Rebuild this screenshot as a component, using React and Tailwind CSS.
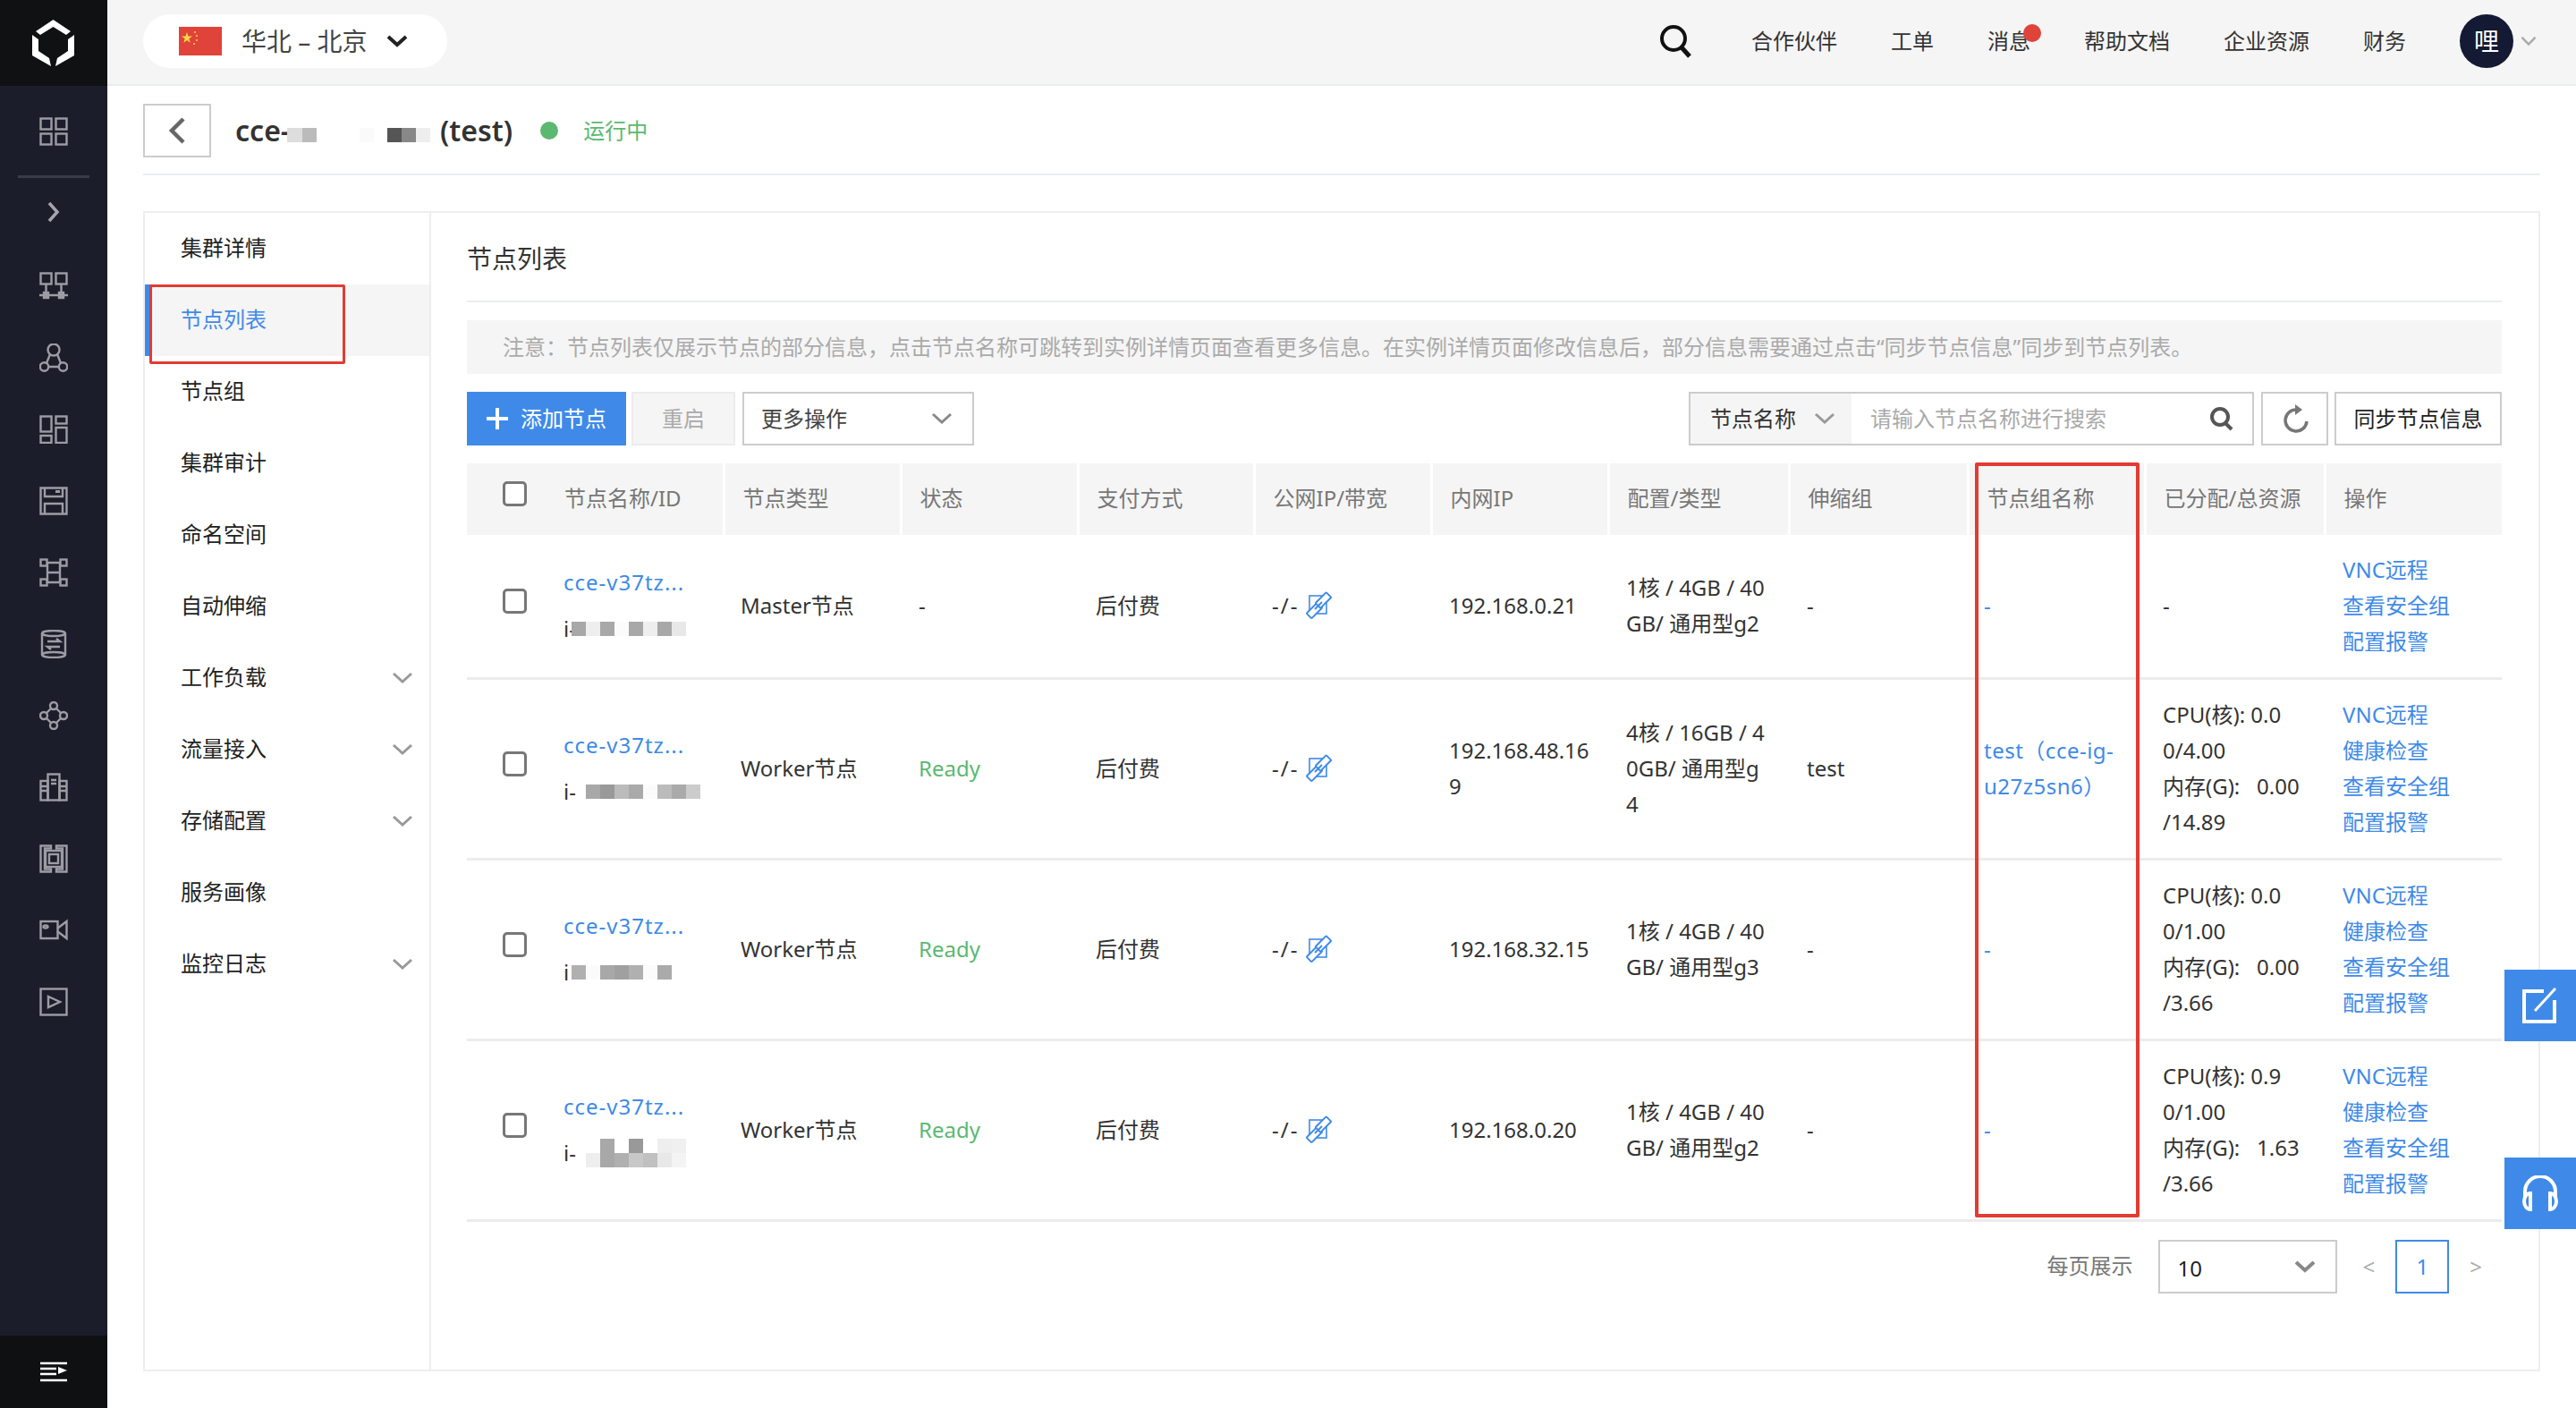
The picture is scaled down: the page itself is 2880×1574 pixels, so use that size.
const FONT = "font-['Noto_Sans','Noto_Sans_CJK_SC',sans-serif]";

// one 32x32 icon in the dark side rail
const RailIcon = ({ children }) => (
  <div className="h-20 flex items-center justify-center shrink-0">
    <svg width="32" height="32" viewBox="0 0 32 32" fill="none" stroke="#9c9da4" strokeWidth="2.400">
      {children}
    </svg>
  </div>
);

const Chevron = ({ className = '', color = '#999', width = 24, height = 14, stroke = 3 }) => (
  <svg width={width} height={height} viewBox="0 0 24 14" fill="none" stroke={color} strokeWidth={stroke} preserveAspectRatio="none" className={className}>
    <path d="M2 2l10 9 10-9" />
  </svg>
);

const Blocks = ({ colors, size = 16 }) => (
  <div className="flex">
    {colors.map((c, i) => (
      <div key={i} style={{ background: c, width: size, height: size }} />
    ))}
  </div>
);

const LinkIcon = () => (
  <svg width="30" height="32" viewBox="0 0 30 32" fill="none" stroke="#3f8ae8" strokeWidth="2" className="shrink-0">
    <rect x="5" y="5" width="19" height="20" strokeWidth="1.600" />
    <rect x="2" y="17.500" width="17" height="8" rx="1" transform="rotate(-45 10.500 21.500)" fill="#ffffff" />
    <rect x="12" y="6" width="17" height="8" rx="1" transform="rotate(-45 20.500 10)" fill="#ffffff" />
    <path d="M11 20l8-8" />
  </svg>
);

const columns = [
  { label: '节点名称/ID', w: 'w-[287px]' },
  { label: '节点类型', w: 'w-[198px]' },
  { label: '状态', w: 'w-[198px]' },
  { label: '支付方式', w: 'w-[197px]' },
  { label: '公网IP/带宽', w: 'w-[198px]' },
  { label: '内网IP', w: 'w-[198px]' },
  { label: '配置/类型', w: 'w-[202px]' },
  { label: '伸缩组', w: 'w-[200px]' },
  { label: '节点组名称', w: 'w-[198px]' },
  { label: '已分配/总资源', w: 'w-[201px]' },
  { label: '操作', w: 'w-[198px]' },
];

const OPS = ['VNC远程', '健康检查', '查看安全组', '配置报警'];

const rows = [
  {
    h: 'h-[160px]',
    type: 'Master节点',
    status: '-',
    ip: ['192.168.0.21'],
    config: ['1核 / 4GB / 40', 'GB/ 通用型g2'],
    scale: '-',
    group: ['-'],
    res: ['-'],
    ops: ['VNC远程', '查看安全组', '配置报警'],
    idPrefix: 'i-',
    idGap: 'ml-0',
    id: [['#a8a8a8', '#eeeeee', '#a8a8a8', '#fbfbfb', '#a8a8a8', '#eeeeee', '#a8a8a8', '#e8e8e8']],
  },
  {
    h: 'h-[202px]',
    type: 'Worker节点',
    status: 'Ready',
    ip: ['192.168.48.16', '9'],
    config: ['4核 / 16GB / 4', '0GB/ 通用型g', '4'],
    scale: 'test',
    group: ['test（cce-ig-', 'u27z5sn6）'],
    res: ['CPU(核): 0.0', '0/4.00', '内存(G):   0.00', '/14.89'],
    ops: OPS,
    idPrefix: 'i-',
    idGap: 'ml-4',
    id: [['#a8a8a8', '#999999', '#bbbbbb', '#aaaaaa', '#fbfbfb', '#bbbbbb', '#aaaaaa', '#cccccc']],
  },
  {
    h: 'h-[202px]',
    type: 'Worker节点',
    status: 'Ready',
    ip: ['192.168.32.15'],
    config: ['1核 / 4GB / 40', 'GB/ 通用型g3'],
    scale: '-',
    group: ['-'],
    res: ['CPU(核): 0.0', '0/1.00', '内存(G):   0.00', '/3.66'],
    ops: OPS,
    idPrefix: 'i',
    idGap: 'ml-0',
    id: [['#b0b0b0', '#fbfbfb', '#a8a8a8', '#a0a0a0', '#b0b0b0', '#fbfbfb', '#aaaaaa']],
  },
  {
    h: 'h-[202px]',
    type: 'Worker节点',
    status: 'Ready',
    ip: ['192.168.0.20'],
    config: ['1核 / 4GB / 40', 'GB/ 通用型g2'],
    scale: '-',
    group: ['-'],
    res: ['CPU(核): 0.9', '0/1.00', '内存(G):   1.63', '/3.66'],
    ops: OPS,
    idPrefix: 'i-',
    idGap: 'ml-4',
    id: [
      ['#ffffff', '#a8a8a8', '#ffffff', '#999999', '#ffffff', '#eeeeee', '#f0f0f0'],
      ['#eeeeee', '#a8a8a8', '#b0b0b0', '#c8c8c8', '#c0c0c0', '#e8e8e8', '#f4f4f4'],
    ],
  },
];

const navItems = [
  { label: '集群详情' },
  { label: '节点列表', active: true },
  { label: '节点组' },
  { label: '集群审计' },
  { label: '命名空间' },
  { label: '自动伸缩' },
  { label: '工作负载', more: true },
  { label: '流量接入', more: true },
  { label: '存储配置', more: true },
  { label: '服务画像' },
  { label: '监控日志', more: true },
];

const topLinks = [
  { label: '合作伙伴', w: 'w-[96px]' },
  { label: '工单', w: 'w-[48px]' },
  { label: '消息', w: 'w-[48px]', dot: true },
  { label: '帮助文档', w: 'w-[96px]' },
  { label: '企业资源', w: 'w-[96px]' },
  { label: '财务', w: 'w-[48px]' },
];

const SideRail = () => (
  <aside className="w-[120px] shrink-0 bg-[#1c1d2a] flex flex-col">
    <div className="h-24 bg-[#101113] flex items-center justify-center shrink-0">
      <svg width="48" height="52" viewBox="38 20 48 52" fill="#ffffff">
        <path d="M61.500 20L81 33l-5 4-14.500-9L47 37l-5-4z" />
        <path d="M38 37l7 5v13l12 8 2 9-21-12z" />
        <path d="M85 37l-7 5v13l-12 8-2 9 21-12z" />
      </svg>
    </div>
    <div className="pt-[11px] shrink-0">
      <RailIcon>
        <rect x="1.500" y="1.500" width="12" height="12" /><rect x="18.500" y="1.500" width="12" height="12" /><rect x="1.500" y="18.500" width="12" height="12" /><rect x="18.500" y="18.500" width="12" height="12" />
      </RailIcon>
    </div>
    <div className="mt-[9px] mx-5 h-[3px] bg-[#3a3b48] shrink-0" />
    <div className="h-[76px] flex items-center justify-center shrink-0">
      <svg width="16" height="24" viewBox="0 0 16 24" fill="none" stroke="#a5a6ab" strokeWidth="3.500">
        <path d="M3 2l9 10-9 10" />
      </svg>
    </div>
    <div className="mt-[5px] flex flex-col">
      <RailIcon>
        <rect x="1.500" y="1.500" width="12" height="12" /><rect x="18.500" y="1.500" width="12" height="12" />
        <path d="M7.500 14v12M24.500 14v12M0 26h32" /><rect x="5" y="23" width="5" height="6" fill="#9c9da4" /><rect x="22" y="23" width="5" height="6" fill="#9c9da4" />
      </RailIcon>
      <RailIcon>
        <circle cx="16" cy="7" r="6.500" /><circle cx="5.500" cy="26" r="4.700" /><circle cx="26.500" cy="26" r="4.700" />
        <path d="M12 12l-4 10M20 12l4 10M10 26h12" />
      </RailIcon>
      <RailIcon>
        <rect x="1.500" y="1.500" width="12" height="17" /><rect x="18.500" y="1.500" width="12" height="8" /><rect x="18.500" y="14" width="12" height="17" /><rect x="1.500" y="23" width="12" height="8" />
      </RailIcon>
      <RailIcon>
        <path d="M1.500 1.500h29v29h-29z" /><path d="M6 31V19h20v12M6 1v10h20V1" /><rect x="18" y="4" width="5" height="3" fill="#9c9da4" stroke="none" />
      </RailIcon>
      <RailIcon>
        <rect x="1.500" y="1.500" width="7" height="7" /><rect x="23.500" y="1.500" width="7" height="7" /><rect x="1.500" y="23.500" width="7" height="7" /><rect x="23.500" y="23.500" width="7" height="7" />
        <path d="M9 5h14M9 16h14M9 27h14M9 5v22M23 5v22" />
      </RailIcon>
      <RailIcon>
        <ellipse cx="16" cy="4" rx="13" ry="3" /><ellipse cx="16" cy="28" rx="13" ry="3" /><path d="M3 4v24M29 4v24" />
        <path d="M9 13h14l-4-3M23 19H9l4 3" />
      </RailIcon>
      <RailIcon>
        <circle cx="16" cy="5" r="4" /><circle cx="16" cy="27" r="4" /><circle cx="5" cy="16" r="4" /><circle cx="27" cy="16" r="4" />
        <path d="M13 8l-5 5M19 8l5 5M13 24l-5-5M19 24l5-5" />
      </RailIcon>
      <RailIcon>
        <rect x="1.500" y="9" width="8" height="21.500" /><rect x="9.500" y="1.500" width="13" height="29" /><rect x="22.500" y="9" width="8" height="21.500" />
        <path d="M13 8h6M13 12h6M2 15h7M2 20h7M23 15h7M23 20h7" />
      </RailIcon>
      <RailIcon>
        <path d="M13 1.500H1.500v29H13v-3H6v-23h7zM19 1.500h11.500v29H19v-3h7v-23h-7z" /><rect x="7" y="7" width="18" height="18" /><rect x="11" y="11" width="10" height="10" />
      </RailIcon>
      <RailIcon>
        <rect x="1.500" y="6" width="19" height="19" /><path d="M20 14l10.500-8v19L20 17" /><ellipse cx="7" cy="12" rx="2.500" ry="1.500" />
      </RailIcon>
      <RailIcon>
        <rect x="1.500" y="1.500" width="29" height="29" /><path d="M10 10l13 6-13 6z" />
      </RailIcon>
    </div>
    <div className="mt-auto h-[81px] bg-[#0f1012] flex items-center justify-center shrink-0">
      <svg width="30" height="24" viewBox="0 0 30 24" fill="none" stroke="#ffffff" strokeWidth="2.500">
        <path d="M0 2h30M0 8h18M0 14h18M0 21h30" />
        <path d="M20 6l10 4-10 4z" fill="#ffffff" stroke="none" />
      </svg>
    </div>
  </aside>
);

const TopBar = () => (
  <header className="h-24 shrink-0 bg-[#f5f5f5] border-b-2 border-[#e8ecf0] flex items-center justify-between pl-10 pr-[44px]">
    <div className="w-[340px] h-[60px] rounded-full bg-white flex items-center pl-10 -mt-[2px]">
      <svg width="48" height="32" viewBox="0 0 48 32" className="shrink-0">
        <rect width="48" height="32" fill="#e0433a" />
        <path d="M9 6l1.500 4.500h4.500l-3.700 2.800 1.400 4.400L9 15l-3.700 2.700 1.400-4.400L3 10.500h4.500z" fill="#f6d84a" />
        <circle cx="18" cy="6" r="1" fill="#f6d84a" /><circle cx="20" cy="10" r="1" fill="#f6d84a" /><circle cx="20" cy="15" r="1" fill="#f6d84a" /><circle cx="17" cy="19" r="1" fill="#f6d84a" />
      </svg>
      <span className="ml-[22px] text-[28px] leading-none text-[#444]">华北 – 北京</span>
      <Chevron className="ml-[21px]" color="#222" stroke={4} />
    </div>
    <div className="flex items-center -mt-[2px]">
      <svg width="38" height="38" viewBox="0 0 38 38" fill="none" stroke="#111" strokeWidth="4" className="mr-[66px]">
        <circle cx="17" cy="16" r="13" />
        <path d="M26 26l9 10" strokeWidth="5" />
      </svg>
      {topLinks.map((l) => (
        <div key={l.label} className={`relative ${l.w} mr-[60px] text-2xl leading-none text-[#333] whitespace-nowrap`}>
          {l.label}
          {l.dot && <span className="absolute -top-[7px] -right-[12px] w-5 h-5 rounded-full bg-[#e0433a]" />}
        </div>
      ))}
      <div className="w-[60px] h-[60px] rounded-full bg-[#141a33] text-white text-[28px] flex items-center justify-center">哩</div>
      <Chevron className="ml-2" color="#aaa" width={18} height={12} />
    </div>
  </header>
);

const TitleBar = () => (
  <div className="shrink-0 mx-10 mt-5 pb-[18px] border-b-2 border-[#ebedf0] flex items-center">
    <div className="w-[76px] h-[60px] border-2 border-[#cccccc] flex items-center justify-center">
      <svg width="20" height="30" viewBox="0 0 20 30" fill="none" stroke="#666" strokeWidth="4.500">
        <path d="M17 2L4 15l13 13" />
      </svg>
    </div>
    <span className="ml-[27px] w-[58px] text-[32px] font-semibold leading-none text-[#333] whitespace-nowrap">cce-</span>
    <div className="w-[160px] h-[16px] flex mt-[10px] shrink-0">
      <div className="w-[17px] bg-[#dddddd]" />
      <div className="w-[16px] bg-[#bbbbbb]" />
      <div className="w-[48px]" />
      <div className="w-[16px] bg-[#fafafa]" />
      <div className="w-[15px]" />
      <div className="w-[16px] bg-[#555555]" />
      <div className="w-[16px] bg-[#888888]" />
      <div className="w-[16px] bg-[#eeeeee]" />
    </div>
    <span className="ml-[11px] text-[32px] font-semibold leading-none text-[#333]">(test)</span>
    <span className="ml-[31px] w-5 h-5 rounded-full bg-[#5cb870]" />
    <span className="ml-[28px] text-2xl leading-none text-[#5cb870]">运行中</span>
  </div>
);

const SideNav = () => (
  <nav className="relative w-[320px] shrink-0 border-r-2 border-[#eeeeee]">
    {navItems.map((item) => (
      <div
        key={item.label}
        className={`h-20 flex items-center justify-between pl-10 pr-[18px] text-2xl ${
          item.active ? 'bg-[#f5f5f5] text-[#3f8ae8] border-l-[7px] border-[#3f8ae8] !pl-[33px]' : 'text-[#222]'
        }`}
      >
        <span className="-mt-[2px]">{item.label}</span>
        {item.more && <Chevron />}
      </div>
    ))}
    {/* red annotation around the active entry */}
    <div className="absolute left-[5px] top-[80px] w-[219px] h-[89px] border-[3px] border-[#e23b33] rounded-[2px]" />
  </nav>
);

const Toolbar = () => (
  <div className="mt-5 h-[60px] flex items-center justify-between">
    <div className="flex items-center">
      <div className="w-[178px] h-[60px] bg-[#3f8ae8] flex items-center justify-center text-white text-2xl">
        <svg width="26" height="26" viewBox="0 0 26 26" stroke="#ffffff" strokeWidth="4">
          <path d="M13 1v24M1 13h24" />
        </svg>
        <span className="ml-[13px] mr-[1px]">添加节点</span>
      </div>
      <div className="ml-[6px] w-[116px] h-[60px] bg-[#f5f5f5] border-2 border-[#ececec] flex items-center justify-center text-2xl text-[#aaa]">重启</div>
      <div className="ml-[8px] w-[259px] h-[60px] border-2 border-[#cccccc] flex items-center justify-between pl-[19px] pr-[22px] text-2xl text-[#444]">
        <span>更多操作</span>
        <Chevron color="#888" />
      </div>
    </div>
    <div className="flex items-center">
      <div className="w-[632px] h-[60px] border-2 border-[#cccccc] flex">
        <div className="w-[180px] bg-[#f5f5f5] flex items-center justify-between pl-[22px] pr-[18px] text-2xl text-[#333]">
          <span>节点名称</span>
          <Chevron />
        </div>
        <div className="flex-1 flex items-center justify-between pl-[21px] pr-[20px] text-2xl text-[#aaa]">
          <span>请输入节点名称进行搜索</span>
          <svg width="28" height="28" viewBox="0 0 28 28" fill="none" stroke="#555" strokeWidth="4">
            <circle cx="12" cy="12" r="9" />
            <path d="M18 19l7 7" />
          </svg>
        </div>
      </div>
      <div className="ml-2 w-[75px] h-[60px] border-2 border-[#cccccc] flex items-center justify-center">
        <svg width="30" height="32" viewBox="0 0 30 32" fill="none" stroke="#777" strokeWidth="3.500">
          <path d="M17 6a12 12 0 1 0 11 13" />
          <path d="M15 0l8 6-8 6z" fill="#777" stroke="none" />
        </svg>
      </div>
      <div className="ml-[7px] w-[187px] h-[60px] border-2 border-[#cccccc] flex items-center justify-center text-2xl text-[#222]">同步节点信息</div>
    </div>
  </div>
);

const Checkbox = ({ className = '' }) => (
  <div className={`w-[27px] h-[28px] border-[3px] border-[#777] rounded-[5px] bg-white shrink-0 ${className}`} />
);

const NodeTable = () => (
  <div className="relative mt-5">
    <table className="w-[2275px] table-fixed border-collapse">
      <thead>
        <tr className="h-20">
          {columns.map((c, i) => (
            <th key={c.label} className={`${c.w} p-0 pb-[2px] font-normal text-left text-2xl text-[#777] bg-[#f5f5f5] ${i < 10 ? 'border-r-[3px] border-white' : ''}`}>
              {i === 0 ? (
                <div className="flex items-center pl-10">
                  <Checkbox className="mb-[10px]" />
                  <span className="ml-[42px]">{c.label}</span>
                </div>
              ) : (
                <span className="pl-5">{c.label}</span>
              )}
            </th>
          ))}
        </tr>
      </thead>
      <tbody className="text-2xl leading-10 text-[#333]">
        {rows.map((r, idx) => (
          <tr key={idx} className={`${r.h} border-b-[3px] border-[#ececec]`}>
            <td className="p-0">
              <div className="flex items-center pl-10">
                <Checkbox className="mb-[10px]" />
                <div className="ml-[41px]">
                  <div className="text-[#3f8ae8] tracking-[1px]">cce-v37tz...</div>
                  <div className="mt-3 flex items-center text-[#333] h-10">
                    <span className="w-[9px] whitespace-nowrap shrink-0">{r.idPrefix}</span>
                    <div className={r.idGap}>
                      {r.id.map((blocks, i) => (
                        <Blocks key={i} colors={blocks} />
                      ))}
                    </div>
                  </div>
                </div>
              </div>
            </td>
            <td className="p-0 pl-[19px] whitespace-nowrap">{r.type}</td>
            <td className={`p-0 pl-5 ${r.status === 'Ready' ? 'text-[#5cb870]' : ''}`}>{r.status}</td>
            <td className="p-0 pl-5">后付费</td>
            <td className="p-0 pl-5">
              <div className="flex items-center">
                <span className="tracking-[2px]">-/-</span>
                <span className="ml-[7px]"><LinkIcon /></span>
              </div>
            </td>
            <td className="p-0 pl-5">
              {r.ip.map((t) => <div key={t}>{t}</div>)}
            </td>
            <td className="p-0 pl-5 whitespace-nowrap">
              {r.config.map((t) => <div key={t}>{t}</div>)}
            </td>
            <td className="p-0 pl-5">{r.scale}</td>
            <td className="p-0 pl-[18px] text-[#3f8ae8] whitespace-nowrap tracking-[0.5px]">
              {r.group.map((t) => <div key={t}>{t}</div>)}
            </td>
            <td className="p-0 pl-5 whitespace-pre">
              {r.res.map((t) => <div key={t}>{t}</div>)}
            </td>
            <td className="p-0 pl-5 text-[#3f8ae8]">
              {r.ops.map((t) => <div key={t}>{t}</div>)}
            </td>
          </tr>
        ))}
      </tbody>
    </table>
    {/* red annotation around the node group column */}
    <div className="absolute left-[1686px] -top-[1px] w-[184px] h-[844px] border-[4px] border-[#e23b33] rounded-[2px]" />
  </div>
);

const Pager = () => (
  <div className="mt-5 flex items-center justify-end pr-[22px] text-2xl">
    <span className="text-[#777] -mt-[2px]">每页展示</span>
    <div className="ml-7 w-[200px] h-[60px] border-2 border-[#cccccc] flex items-center justify-between pl-5 pr-[22px] text-[#222]">
      <span className="mt-1">10</span>
      <Chevron color="#888" stroke={4} />
    </div>
    <span className="ml-[29px] text-[#aaa]">&lt;</span>
    <div className="ml-[23px] w-[60px] h-[60px] border-2 border-[#3f8ae8] flex items-center justify-center text-[#3f8ae8]">1</div>
    <span className="ml-[23px] text-[#aaa]">&gt;</span>
  </div>
);

const App = () => (
  <div className={`relative w-[2880px] h-[1574px] overflow-hidden flex bg-white ${FONT}`}>
    <SideRail />
    <div className="flex-1 flex flex-col min-w-0">
      <TopBar />
      <TitleBar />
      <div className="mt-10 mx-10 h-[1297px] border-2 border-[#eeeeee] flex">
        <SideNav />
        <section className="flex-1 min-w-0 pl-10 pr-[41px]">
          <div className="h-[100px] pt-[3px] border-b-2 border-[#ebedf0] flex items-center text-[28px] text-[#333]">节点列表</div>
          <div className="mt-5 h-[60px] bg-[#f5f5f5] flex items-center pl-10 text-2xl text-[#aaa] whitespace-nowrap">
            注意：节点列表仅展示节点的部分信息，点击节点名称可跳转到实例详情页面查看更多信息。在实例详情页面修改信息后，部分信息需要通过点击“同步节点信息”同步到节点列表。
          </div>
          <Toolbar />
          <NodeTable />
          <Pager />
        </section>
      </div>
    </div>

    {/* floating side buttons */}
    <div className="absolute left-[2800px] top-[1084px] w-20 h-20 bg-[#3f8ae8] flex items-center justify-center">
      <svg width="40" height="40" viewBox="0 0 40 40" fill="none" stroke="#ffffff" strokeWidth="4">
        <path d="M24 4H2v34h34V14" />
        <path d="M14 26L37 1" strokeWidth="3" />
      </svg>
    </div>
    <div className="absolute left-[2800px] top-[1294px] w-20 h-20 bg-[#3f8ae8] flex items-center justify-center">
      <svg width="50" height="40" viewBox="0 0 50 40" fill="none" stroke="#ffffff" strokeWidth="4">
        <path d="M8 24v-6a17 17 0 0 1 34 0v6" />
        <path d="M14 20a7 9 0 0 0 0 18zM36 20a7 9 0 0 1 0 18z" />
      </svg>
    </div>
  </div>
);

export default App;
